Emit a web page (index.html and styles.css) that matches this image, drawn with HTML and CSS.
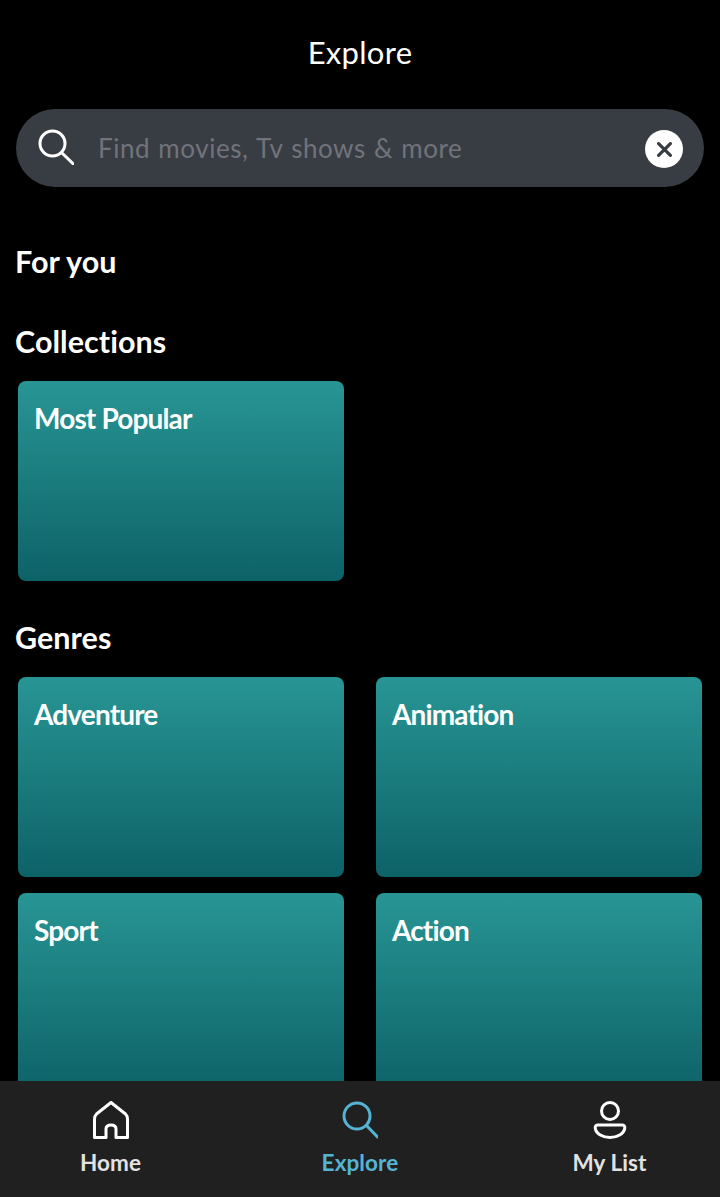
FILE: index.html
```html
<!DOCTYPE html>
<html lang="en">
<head>
<meta charset="utf-8">
<title>Explore</title>
<link rel="stylesheet" href="styles.css">
</head>
<body>
<div class="app">
  <main class="content">
    <h1 class="page-title">Explore</h1>
    <div class="search">
      <svg class="search-icon" viewBox="0 0 36 36" fill="none" stroke="#fff" stroke-width="3" stroke-linecap="round"><circle cx="14.500" cy="14.500" r="12.500"/><path d="M24 24 35 34.600"/></svg>
      <span class="search-text">Find movies, Tv shows &amp; more</span>
      <span class="clear"><svg viewBox="0 0 14 14" fill="none" stroke="#383c43" stroke-width="3" stroke-linecap="round"><path d="M1.500 1.500 12.500 12.500M12.500 1.500 1.500 12.500"/></svg></span>
    </div>
    <h2 class="section first">For you</h2>
    <h2 class="section">Collections</h2>
    <div class="grid">
      <div class="card">Most Popular</div>
    </div>
    <h2 class="section">Genres</h2>
    <div class="grid">
      <div class="card">Adventure</div>
      <div class="card">Animation</div>
      <div class="card">Sport</div>
      <div class="card">Action</div>
    </div>
  </main>
  <nav class="tabbar">
    <div class="tab">
      <svg class="tab-icon" viewBox="0 0 36 38" fill="none" stroke="#fff" stroke-width="3" stroke-linejoin="round"><path d="M18 1.500 3.500 13Q1.500 15 1.500 18V36.500H13V28Q13 24 18 24Q23 24 23 28V36.500H34.500V18Q34.500 15 32.500 13Z"/></svg>
      <span class="tab-label">Home</span>
    </div>
    <div class="tab active">
      <svg class="tab-icon" viewBox="0 0 36 38" fill="none" stroke="#55b4d4" stroke-width="3" stroke-linecap="round"><circle cx="15" cy="15" r="13"/><path d="M24.500 24.500 35.500 36"/></svg>
      <span class="tab-label">Explore</span>
    </div>
    <div class="tab">
      <svg class="tab-icon" viewBox="0 0 36 38" fill="none" stroke="#fff" stroke-width="3"><circle cx="18" cy="10" r="8.500"/><path d="M6 24H30Q33 24 32.800 27C32 33 25 36.500 18 36.500C11 36.500 4 33 3.200 27Q3 24 6 24Z"/></svg>
      <span class="tab-label">My List</span>
    </div>
  </nav>
</div>
</body>
</html>
```

FILE: styles.css
```css
* { box-sizing: border-box; }
html, body { margin: 0; padding: 0; background: #000; }
.app {
  width: 720px;
  height: 1197px;
  display: flex;
  flex-direction: column;
  overflow: hidden;
  color: #fff;
  font-family: "Lato", "Noto Sans", sans-serif;
  font-variant-ligatures: none;
}
.content { flex: 1; min-height: 0; overflow: hidden; padding: 0 16px; }
.page-title {
  margin: 0;
  padding-top: 33px;
  height: 109px;
  line-height: 38px;
  text-align: center;
  font-size: 31px;
  font-weight: 400;
  letter-spacing: 0.3px;
}
.search {
  height: 78px;
  border-radius: 39px;
  background: #383c43;
  display: flex;
  align-items: center;
  padding: 0 21px 0 22px;
}
.search-icon { width: 36px; height: 36px; flex: none; margin-bottom: 2px; }
.search-text {
  flex: 1;
  margin-left: 24px;
  font-size: 26px;
  line-height: 36px;
  color: #70747a;
  white-space: nowrap;
  letter-spacing: 0.55px;
  word-spacing: 1px;
  margin-bottom: 1px;
}
.clear {
  width: 38px;
  height: 38px;
  border-radius: 50%;
  background: #fff;
  display: flex;
  align-items: center;
  justify-content: center;
  flex: none;
  margin-top: 2px;
}
.clear svg { width: 15px; height: 15px; }
.section {
  margin: 0;
  height: 38px;
  line-height: 36px;
  font-size: 30.500px;
  font-weight: 700;
  letter-spacing: 0.05px;
  text-indent: -1px;
  margin-top: 42px;
}
.section.first { margin-top: 56px; }
.grid {
  display: grid;
  grid-template-columns: 326px 326px;
  column-gap: 32px;
  row-gap: 16px;
  margin: 20px 2px 0;
}
.grid + .section { margin-top: 38px; }
.card {
  height: 200px;
  border-radius: 8px;
  background: linear-gradient(#289594, #0d6267);
  padding: 17px 16px 16px;
  font-size: 28px;
  line-height: 40px;
  font-weight: 700;
  letter-spacing: -0.85px;
}
.tabbar {
  flex: none;
  height: 116px;
  background: #202020;
  display: grid;
  grid-template-columns: 221px 278px 221px;
}
.tab {
  display: flex;
  flex-direction: column;
  align-items: center;
  padding-top: 20px;
  color: #e2e2e2;
}
.tab-icon { width: 36px; height: 38px; flex: none; }
.tab-label {
  margin-top: 9px;
  font-size: 22.500px;
  line-height: 30px;
  font-weight: 700;
  letter-spacing: 0.1px;
}
.tab.active { color: #55b4d4; }
```
